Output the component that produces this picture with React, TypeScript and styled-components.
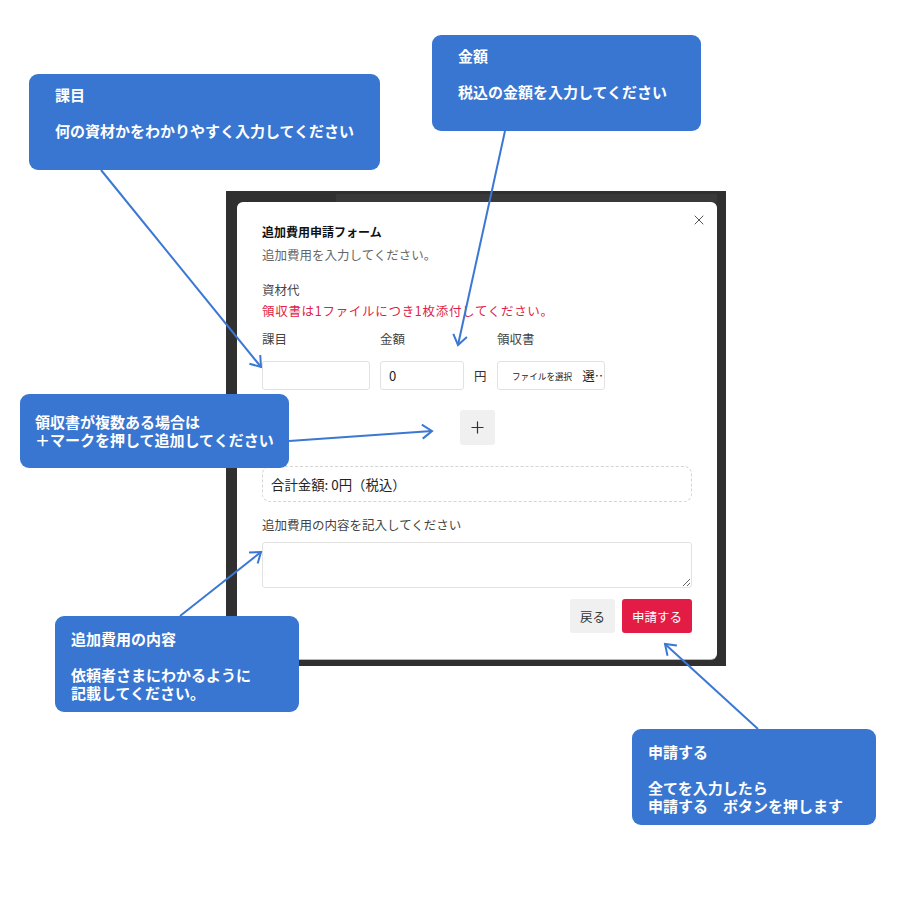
import { Plus, X } from "lucide-react";
import styled, { createGlobalStyle } from "styled-components";

const GlobalStyle = createGlobalStyle`
    body {
        margin: 0;
        background: #ffffff;
        font-family: "Noto Sans CJK JP", "Noto Sans", sans-serif;
    }
`;

const Page = styled.div`
    position: relative;
    width: 916px;
    height: 902px;
    overflow: hidden;
    background: #ffffff;
`;

// dark backdrop behind the dialog
const Frame = styled.div`
    margin: 191px 0 0 226px;
    width: 500px;
    height: 475px;
    box-sizing: border-box;
    padding: 11px 9px 7px 11px;
    background: #303030;
    background-image: linear-gradient(#393939, #393939);
    background-repeat: no-repeat;
    background-size: 381px 8px;
    background-position: 110px 3px;
`;

const Modal = styled.div`
    position: relative;
    background: #ffffff;
    border-radius: 6px;
    box-shadow: 0 1px 0 #b8b8b8;
    padding: 21px 25px 26px;
    color: #333;
    font-size: 12.5px;
    line-height: 18px;
`;

const CloseButton = styled.button`
    position: absolute;
    top: 8px;
    right: 8px;
    width: 20px;
    height: 20px;
    padding: 0;
    border: none;
    background: none;
    color: #555;
    display: flex;
    align-items: center;
    justify-content: center;
`;

const Title = styled.h2`
    margin: 0;
    font-size: 12px;
    line-height: 18px;
    font-weight: 700;
    color: #111;
`;

const Text = styled.p<{ $mt: number; $color?: string; $spacing?: number }>`
    margin: ${(p) => p.$mt}px 0 0;
    color: ${(p) => p.$color ?? "#444"};
    letter-spacing: ${(p) => p.$spacing ?? 0}px;
`;

const ItemGrid = styled.div`
    margin-top: 10px;
    display: grid;
    grid-template-columns: 108px 84px 13px 108px;
    grid-template-rows: 18px 29px;
    column-gap: 10px;
    row-gap: 13px;
    align-items: center;
`;

const Label = styled.span<{ $col: number }>`
    grid-column: ${(p) => p.$col};
    color: #444;
`;

const Input = styled.input`
    box-sizing: border-box;
    width: 100%;
    height: 29px;
    border: 1px solid #e2e2e2;
    border-radius: 3px;
    padding: 0 8px;
    font-family: inherit;
    font-size: 13px;
    color: #222;
    outline: none;
`;

const Yen = styled.span`
    font-size: 12.5px;
    color: #333;
`;

const FileBox = styled.div`
    box-sizing: border-box;
    height: 29px;
    border: 1px solid #e2e2e2;
    border-radius: 3px;
    display: flex;
    align-items: center;
    padding-left: 14px;
    overflow: hidden;
`;

const FileButton = styled.span`
    font-size: 8.6px;
    color: #222;
    white-space: nowrap;
    margin-right: 10px;
`;

const FileName = styled.span`
    font-size: 12.5px;
    color: #222;
    white-space: nowrap;
    overflow: hidden;
    text-overflow: ellipsis;
    min-width: 0;
    padding-right: 2px;
`;

const AddRow = styled.div`
    margin-top: 20px;
    display: flex;
    justify-content: center;
`;

const AddButton = styled.button`
    width: 35px;
    height: 35px;
    border: none;
    border-radius: 3px;
    background: #f0f0f0;
    color: #333;
    display: flex;
    align-items: center;
    justify-content: center;
    padding: 0;
`;

const TotalBox = styled.div`
    margin-top: 21px;
    height: 36px;
    box-sizing: border-box;
    border: 1px dashed #d4d4d4;
    border-radius: 8px;
    padding: 0 8px;
    display: flex;
    align-items: center;
    font-size: 13.4px;
    color: #222;
`;

const TextArea = styled.textarea`
    display: block;
    margin-top: 8px;
    width: 100%;
    height: 46px;
    box-sizing: border-box;
    border: 1px solid #e2e2e2;
    border-radius: 3px;
    font-family: inherit;
    outline: none;
`;

const Actions = styled.div`
    margin-top: 11px;
    display: flex;
    justify-content: flex-end;
    gap: 7px;
`;

const ActionButton = styled.button<{ $primary?: boolean }>`
    height: 34px;
    padding: 0 10px;
    border: none;
    border-radius: 3px;
    font-family: inherit;
    font-size: 12.5px;
    background: ${(p) => (p.$primary ? "#e31c46" : "#f0f0f0")};
    color: ${(p) => (p.$primary ? "#ffffff" : "#333")};
`;

// blue annotation bubbles
const Callout = styled.div<{ $x: number; $y: number; $w: number; $h: number; $pad: string }>`
    position: absolute;
    left: ${(p) => p.$x}px;
    top: ${(p) => p.$y}px;
    width: ${(p) => p.$w}px;
    height: ${(p) => p.$h}px;
    box-sizing: border-box;
    padding: ${(p) => p.$pad};
    background: #3876d1;
    border-radius: 9px;
    color: #ffffff;
    font-size: 15px;
    line-height: 18px;
    font-weight: 700;
    white-space: pre;
`;

const ArrowLayer = styled.svg`
    position: absolute;
    left: 0;
    top: 0;
    pointer-events: none;
`;

const notes = [
    { x: 29, y: 74, w: 351, h: 96, pad: "12px 26px", text: "課目\n\n何の資材かをわかりやすく入力してください" },
    { x: 432, y: 35, w: 269, h: 96, pad: "12px 26px", text: "金額\n\n税込の金額を入力してください" },
    { x: 20, y: 394, w: 269, h: 74, pad: "19px 15px", text: "領収書が複数ある場合は\n＋マークを押して追加してください" },
    { x: 55, y: 616, w: 244, h: 96, pad: "14px 16px", text: "追加費用の内容\n\n依頼者さまにわかるように\n記載してください。" },
    { x: 632, y: 729, w: 244, h: 96, pad: "14px 16px", text: "申請する\n\n全てを入力したら\n申請する　ボタンを押します" },
];

const arrows = [
    [101, 170, 261, 367],
    [505, 131, 458, 345],
    [289, 441, 432, 431],
    [180, 616, 261, 552],
    [758, 729, 665, 644],
];

function headPoints(x1: number, y1: number, x2: number, y2: number) {
    const a = Math.atan2(y2 - y1, x2 - x1);
    const len = 12;
    const spread = 0.62;
    const p1 = [x2 - len * Math.cos(a - spread), y2 - len * Math.sin(a - spread)];
    const p2 = [x2 - len * Math.cos(a + spread), y2 - len * Math.sin(a + spread)];
    return `${p1[0]},${p1[1]} ${x2},${y2} ${p2[0]},${p2[1]}`;
}

function App() {
    return (
        <Page>
            <GlobalStyle />
            <Frame>
                <Modal>
                    <CloseButton>
                        <X size={16} strokeWidth={1.5} />
                    </CloseButton>
                    <Title>追加費用申請フォーム</Title>
                    <Text $mt={5} $color="#666">追加費用を入力してください。</Text>
                    <Text $mt={17}>資材代</Text>
                    <Text $mt={3} $color="#e11d48" $spacing={0.7}>領収書は1ファイルにつき1枚添付してください。</Text>
                    <ItemGrid>
                        <Label $col={1}>課目</Label>
                        <Label $col={2}>金額</Label>
                        <Label $col={4}>領収書</Label>
                        <Input />
                        <Input defaultValue="0" />
                        <Yen>円</Yen>
                        <FileBox>
                            <FileButton>ファイルを選択</FileButton>
                            <FileName>選択されていません</FileName>
                        </FileBox>
                    </ItemGrid>
                    <AddRow>
                        <AddButton>
                            <Plus size={19} strokeWidth={1.5} />
                        </AddButton>
                    </AddRow>
                    <TotalBox>合計金額: 0円（税込）</TotalBox>
                    <Text $mt={14}>追加費用の内容を記入してください</Text>
                    <TextArea />
                    <Actions>
                        <ActionButton>戻る</ActionButton>
                        <ActionButton $primary>申請する</ActionButton>
                    </Actions>
                </Modal>
            </Frame>
            {notes.map((n) => (
                <Callout key={n.text} $x={n.x} $y={n.y} $w={n.w} $h={n.h} $pad={n.pad}>
                    {n.text}
                </Callout>
            ))}
            <ArrowLayer width={916} height={902}>
                {arrows.map(([x1, y1, x2, y2]) => (
                    <g key={`${x1}-${y1}`} stroke="#3a78d4" strokeWidth={2} fill="none">
                        <line x1={x1} y1={y1} x2={x2} y2={y2} />
                        <polyline points={headPoints(x1, y1, x2, y2)} strokeLinejoin="miter" />
                    </g>
                ))}
            </ArrowLayer>
        </Page>
    );
}

export default App;
